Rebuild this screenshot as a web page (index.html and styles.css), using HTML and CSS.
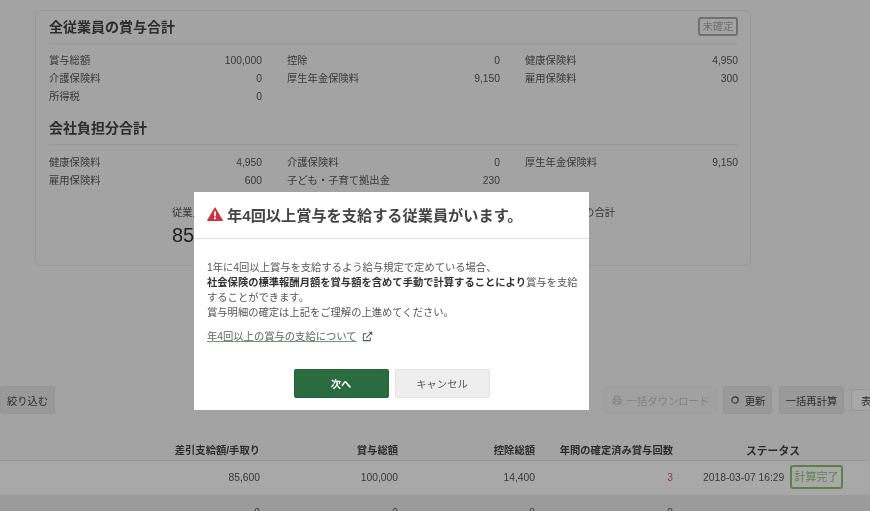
FILE: index.html
```html
<!DOCTYPE html>
<html lang="ja">
<head>
  <meta charset="UTF-8" />
  <title>賞与計算</title>
  <link rel="stylesheet" href="styles.css">
</head>
<body>
  <div class="page">
    <section class="summary-card">
      <div class="summary-head">
        <h2>全従業員の賞与合計</h2>
        <span class="state-badge">未確定</span>
      </div>
      <div class="summary-grid">
        <div class="item"><span>賞与総額</span><span>100,000</span></div>
        <div class="item"><span>控除</span><span>0</span></div>
        <div class="item"><span>健康保険料</span><span>4,950</span></div>
        <div class="item"><span>介護保険料</span><span>0</span></div>
        <div class="item"><span>厚生年金保険料</span><span>9,150</span></div>
        <div class="item"><span>雇用保険料</span><span>300</span></div>
        <div class="item"><span>所得税</span><span>0</span></div>
      </div>
      <div class="summary-head second">
        <h2>会社負担分合計</h2>
      </div>
      <div class="summary-grid company">
        <div class="item"><span>健康保険料</span><span>4,950</span></div>
        <div class="item"><span>介護保険料</span><span>0</span></div>
        <div class="item"><span>厚生年金保険料</span><span>9,150</span></div>
        <div class="item"><span>雇用保険料</span><span>600</span></div>
        <div class="item"><span>子ども・子育て拠出金</span><span>230</span></div>
      </div>
      <div class="stats">
        <div class="stat">
          <div class="stat-label">従業員の差引支給額合計</div>
          <div class="stat-value">85,600</div>
        </div>
        <div class="stat">
          <div class="stat-label">従業員の賞与総額の合計</div>
          <div class="stat-date">2018年03月07日</div>
        </div>
      </div>
    </section>

    <div class="toolbar">
      <button class="btn">絞り込む</button>
      <div class="toolbar-right">
        <button class="btn btn-disabled">
          <svg class="btn-icon" viewBox="0 0 12 12"><path d="M3 5V1.500h6V5M3 9.500H1V5h10v4.500H9M3 7.500h6V11H3z" fill="none" stroke="currentColor" stroke-width="1.200"/></svg>
          一括ダウンロード
        </button>
        <button class="btn btn-refresh">
          <svg class="btn-icon" viewBox="0 0 12 12"><circle cx="6" cy="6" r="3.800" fill="none" stroke="currentColor" stroke-width="1.300"/></svg>
          更新
        </button>
        <button class="btn btn-recalc">一括再計算</button>
        <button class="btn btn-light">表示設定</button>
      </div>
    </div>

    <div class="table">
      <div class="table-row table-head">
        <div>差引支給額/手取り</div>
        <div>賞与総額</div>
        <div>控除総額</div>
        <div>年間の確定済み賞与回数</div>
        <div class="status-head">ステータス</div>
      </div>
      <div class="table-row row-light">
        <div>85,600</div>
        <div>100,000</div>
        <div>14,400</div>
        <div class="count-alert">3</div>
        <div class="status-cell">2018-03-07 16:29<span class="done-badge">計算完了</span></div>
      </div>
      <div class="table-row row-dark">
        <div>0</div>
        <div>0</div>
        <div>0</div>
        <div>0</div>
        <div class="status-cell"></div>
      </div>
    </div>
  </div>

  <div class="overlay"></div>

  <div class="modal">
    <div class="modal-head">
      <svg class="warn-icon" viewBox="0 0 16 14"><path d="M8 1 15.200 13.400H.8z" fill="#c9323f" stroke="#c9323f" stroke-width="1.200" stroke-linejoin="round"/><path d="M7 4.500h2l-.3 5H7.300zM7 10.500h2v1.800H7z" fill="#fff"/></svg>
      <h3>年4回以上賞与を支給する従業員がいます。</h3>
    </div>
    <div class="modal-body">
      <p>1年に4回以上賞与を支給するよう給与規定で定めている場合、<br><b>社会保険の標準報酬月額を賞与額を含めて手動で計算することにより</b>賞与を支給することができます。<br>賞与明細の確定は上記をご理解の上進めてください。</p>
      <div class="modal-link">
        <a href="#">年4回以上の賞与の支給について</a>
        <svg class="ext-icon" viewBox="0 0 12 12"><path d="M9 7v3.500H1.500V3H5" fill="none" stroke="#555" stroke-width="1.100"/><path d="M4.500 7.500 10 2" stroke="#555" stroke-width="1.200"/><path d="M7.200 .8h4v4z" fill="#555"/></svg>
      </div>
    </div>
    <div class="modal-foot">
      <button class="modal-btn modal-next">次へ</button>
      <button class="modal-btn modal-cancel">キャンセル</button>
    </div>
  </div>
</body>
</html>
```

FILE: styles.css
```css
* { margin: 0; padding: 0; box-sizing: border-box; font-family: 'Liberation Sans', 'Noto Sans CJK JP', sans-serif; }

html, body {
  height: 100%;
  overflow: hidden;
}

body {
  background: #f7f7f7;
  color: #555;
  font-size: 10.3px;
}

.page {
  width: 870px;
  height: 511px;
  padding-top: 10px;
  overflow: hidden;
  filter: blur(0.4px);
}

.summary-card {
  width: 716px;
  height: 256px;
  margin-left: 35px;
  padding: 0 12px 0 13px;
  border: 1px solid #e6e6e6;
  border-radius: 6px;
}

.summary-head {
  display: flex;
  justify-content: space-between;
  align-items: center;
  height: 33px;
  padding-bottom: 2px;
  border-bottom: 1px solid #e6e6e6;
}

.summary-head.second {
  margin-top: 6px;
  height: 33px;
  padding-bottom: 3px;
}

.summary-head h2 {
  font-size: 14px;
  font-weight: 700;
  color: #444;
}

.state-badge {
  width: 40px;
  height: 19px;
  line-height: 15px;
  border: 2px solid #aaa;
  border-radius: 3px;
  color: #a8a8a8;
  text-align: center;
}

.summary-grid {
  display: grid;
  grid-template-columns: repeat(3, 213px);
  column-gap: 25px;
  margin-top: 8px;
}

.summary-grid.company {
  margin-top: 9px;
}

.item {
  display: flex;
  justify-content: space-between;
  height: 18px;
  line-height: 18px;
}

.stats {
  display: flex;
  justify-content: space-between;
  width: 443px;
  margin: 14px auto 0;
}

.stat-label {
  line-height: 18px;
}

.stat-value {
  font-size: 20px;
  line-height: 26px;
  color: #333;
}

.stat-date {
  line-height: 32px;
}

.toolbar {
  display: flex;
  justify-content: space-between;
  margin-top: 120px;
  height: 28px;
}

.toolbar-right {
  display: flex;
  align-items: center;
  gap: 7px;
  margin-right: -42px;
}

.btn {
  display: flex;
  align-items: center;
  justify-content: center;
  gap: 5px;
  height: 28px;
  width: 55px;
  border: 1px solid #e2e2e2;
  border-radius: 3px;
  background: #e9e9e9;
  color: #444;
  font-size: 10.3px;
}

.btn-icon {
  width: 10px;
  height: 10px;
}

.btn-disabled {
  width: 113px;
  margin-right: -1px;
  background: #f5f5f5;
  border-color: #eee;
  color: #c4c4c4;
}

.btn-refresh { width: 49px; }
.btn-recalc { width: 65px; }

.btn-light {
  width: 61px;
  height: 22px;
  background: #fff;
}

.table {
  margin-top: 22px;
}

.table-row {
  display: grid;
  grid-template-columns: 260px 138px 137px 138px 200px;
  align-items: center;
  text-align: right;
}

.table-head {
  height: 25px;
  padding-top: 3px;
  border-bottom: 1px solid #e6e6e6;
  font-weight: 700;
  color: #444;
}

.status-head {
  width: 140px;
  margin-left: 30px;
  text-align: center;
  font-size: 10.8px;
}

.row-light {
  height: 34px;
  padding-bottom: 2px;
  background: #fff;
}

.row-dark {
  height: 34px;
  background: #ebebeb;
}

.count-alert {
  color: #e05a5a;
}

.status-cell {
  display: flex;
  align-items: center;
  justify-content: space-between;
  width: 140px;
  margin-left: 30px;
  white-space: nowrap;
}

.done-badge {
  width: 53px;
  height: 24px;
  line-height: 20px;
  border: 2px solid #8ac46c;
  border-radius: 3px;
  color: #93c27c;
  font-size: 11px;
  text-align: center;
}

.overlay {
  position: fixed;
  inset: 0;
  background: rgba(0, 0, 0, 0.34);
}

.modal {
  position: fixed;
  left: 194px;
  top: 192px;
  width: 395px;
  height: 218px;
  background: #fff;
  display: flex;
  flex-direction: column;
  filter: blur(0.25px);
}

.modal-head {
  display: flex;
  align-items: center;
  gap: 4px;
  height: 47px;
  padding: 0 13px 2px;
  border-bottom: 1px solid #e0e0e0;
}

.warn-icon {
  width: 16px;
  height: 14px;
}

.modal-head h3 {
  font-size: 15.2px;
  font-weight: 700;
  color: #444;
}

.modal-body {
  padding: 21px 11px 0 13px;
  line-height: 15px;
  color: #555;
  flex: 1;
}

.modal-body b {
  color: #333;
}

.modal-link {
  display: flex;
  align-items: center;
  gap: 5px;
  margin-top: 9px;
}

.modal-link a {
  color: #5a665e;
  text-decoration: underline;
  text-decoration-color: #6f9a7c;
}

.ext-icon {
  width: 11px;
  height: 11px;
}

.modal-foot {
  display: flex;
  justify-content: center;
  gap: 6px;
  padding-bottom: 12px;
}

.modal-btn {
  width: 95px;
  height: 29px;
  border-radius: 2px;
  font-size: 10.3px;
}

.modal-next {
  border: 1px solid #25633a;
  background: #2a6b3f;
  color: #fff;
  font-weight: 700;
}

.modal-cancel {
  border: 1px solid #e2e2e2;
  background: #eee;
  color: #555;
}
```
